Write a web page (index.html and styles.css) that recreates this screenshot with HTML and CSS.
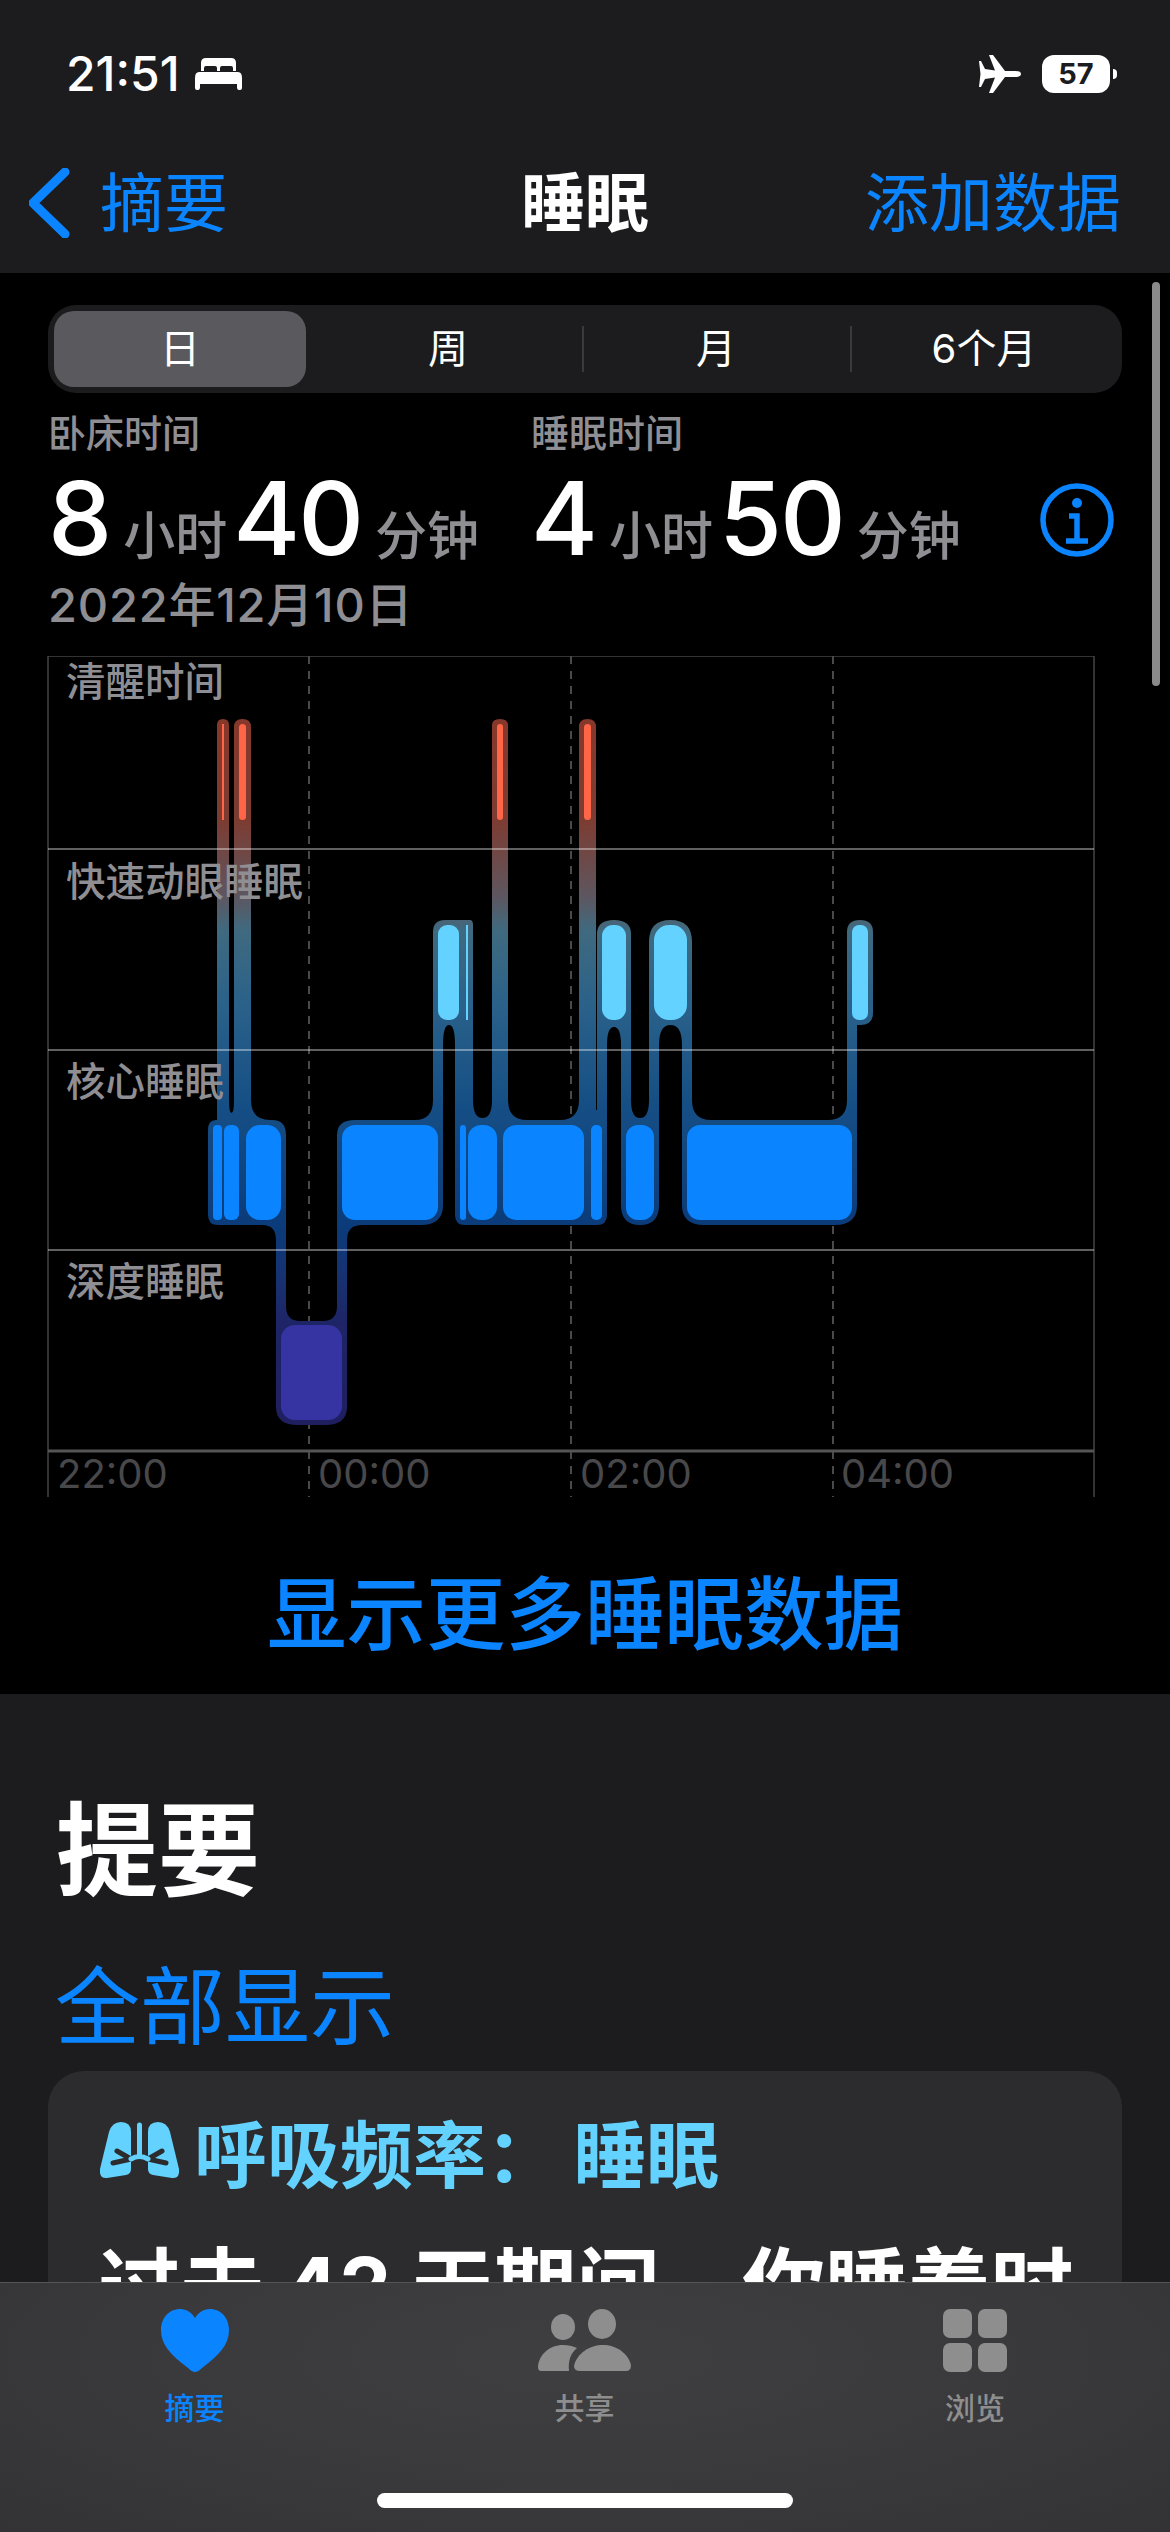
FILE: index.html
```html
<!DOCTYPE html>
<html lang="zh-CN">
<head>
    <meta charset="UTF-8">
    <meta name="viewport" content="width=device-width, initial-scale=1.0">
    <title>睡眠</title>
    <link rel="stylesheet" href="styles.css">
</head>
<body>
<div class="page">
    <header class="topbar">
        <div class="status">
            <div class="status-left">
                <span class="clock">21:51</span>
                <svg class="bed" viewBox="0 0 47 32"><path d="M6 13V5Q6 0 11 0H36Q41 0 41 5V13H38V10Q38 8 36 8H27Q25 8 25 10V13H22V10Q22 8 20 8H11Q9 8 9 10V13Z"/><path d="M4 14H43Q47 14 47 20V30Q47 32 45 32H44Q42 32 42 29V26H5V29Q5 32 3 32H2Q0 32 0 30V20Q0 14 4 14Z"/></svg>
            </div>
            <div class="status-right">
                <svg class="plane" viewBox="0 0 42 38"><path d="M42 19Q42 16 36 16H26L14 0H10L16 15.5L6 14L2 6H0L1.5 19L0 32H2L6 24L16 22.5L10 38H14L26 22H36Q42 22 42 19Z"/></svg>
                <span class="battery">57</span>
                <span class="battery-nub"></span>
            </div>
        </div>
        <nav class="navbar">
            <div class="back">
                <svg class="chevron" viewBox="0 0 41 70"><path d="M36 4L4 35L36 66"/></svg>
                <span>摘要</span>
            </div>
            <div class="nav-title">睡眠</div>
            <div class="nav-action">添加数据</div>
        </nav>
    </header>

    <section class="sleep">
        <div class="segment">
            <div class="seg-item selected">日</div>
            <div class="seg-item">周</div>
            <div class="seg-item line">月</div>
            <div class="seg-item line">6个月</div>
        </div>

        <div class="stats">
            <div class="stat first">
                <div class="stat-label">卧床时间</div>
                <div class="stat-value"><b>8</b><span>小时</span><b>40</b><span>分钟</span></div>
            </div>
            <div class="stat">
                <div class="stat-label">睡眠时间</div>
                <div class="stat-value"><b>4</b><span>小时</span><b>50</b><span>分钟</span></div>
            </div>
            <svg class="info" viewBox="0 0 74 74">
                <circle cx="37" cy="37" r="34"/>
                <circle class="dot" cx="37" cy="20" r="5"/>
                <path d="M29 33H37V58M26 58H48"/>
            </svg>
        </div>
        <div class="date">2022年12月10日</div>

        <!-- viewBox uses page coordinates so the numbers can be read off the screenshot -->
        <svg class="chart" viewBox="0 656 1170 842">
            <defs>
                <linearGradient id="halo" gradientUnits="userSpaceOnUse" x1="0" y1="719" x2="0" y2="1425">
                    <stop offset="0" stop-color="#86382a"/>
                    <stop offset="0.143" stop-color="#7c3c32"/>
                    <stop offset="0.25" stop-color="#5e565f"/>
                    <stop offset="0.3" stop-color="#3f6a80"/>
                    <stop offset="0.41" stop-color="#29618a"/>
                    <stop offset="0.55" stop-color="#154e84"/>
                    <stop offset="0.72" stop-color="#0b3b7a"/>
                    <stop offset="0.8" stop-color="#18306f"/>
                    <stop offset="0.86" stop-color="#1e2466"/>
                    <stop offset="1" stop-color="#1f1f60"/>
                </linearGradient>
            </defs>

            <path class="grid-edge" d="M48 656V1497M1094 656V1497M48 656H1094"/>
            <path class="grid-dash" d="M309 656V1497M571 656V1497M833 656V1497"/>

            <path fill="url(#halo)" d="M208 1130Q208 1120 216 1120H217V725Q217 719 223 719Q229 719 229 725V1100Q229 1113 231.500 1113Q234 1113 234 1100V727Q234 719 242.500 719Q251 719 251 727V1100Q251 1120 270 1120H272Q286 1120 286 1135V1306Q286 1321 300 1321H323Q337 1321 337 1306V1135Q337 1120 355 1120H415Q433 1120 433 1100V932Q433 920 445 920H470Q473 920 473 925V1100Q473 1118 482.500 1118Q492 1118 492 1100V725Q492 719 500 719Q508 719 508 725V1100Q508 1120 527 1120H560Q579 1120 579 1100V727Q579 719 587.500 719Q596 719 596 727V1110H597V934Q597 920 614 920Q631 920 631 934V1100Q631 1118 640 1118Q649 1118 649 1100V942Q649 920 670.500 920Q692 920 692 942V1100Q692 1120 711 1120H828Q847 1120 847 1100V932Q847 920 860 920Q873 920 873 932V1013Q873 1025 860 1025H857V1205Q857 1225 835 1225H704Q682 1225 682 1205V1045Q682 1025 670.500 1025Q659 1025 659 1045V1205Q659 1225 640 1225Q621 1225 621 1205V1045Q621 1027 614 1027Q607 1027 607 1045V1215Q607 1225 597 1225H465Q455 1225 455 1215V1045Q455 1025 449 1025Q443 1025 443 1045V1205Q443 1225 421 1225H362Q347 1225 347 1240V1407Q347 1425 325 1425H298Q276 1425 276 1407V1240Q276 1225 262 1225H218Q208 1225 208 1215Z"/>

            <path class="grid-line" d="M48 849H1094M48 1050H1094M48 1250H1094"/>
            <path class="grid-base" d="M48 1451H1094"/>

            <g class="awake">
                <rect x="222" y="724" width="2" height="96"/>
                <rect x="239" y="724" width="7" height="96" rx="3.500"/>
                <rect x="497" y="724" width="6" height="96" rx="3"/>
                <rect x="584" y="724" width="7" height="96" rx="3.500"/>
            </g>
            <g class="rem">
                <rect x="438" y="925" width="21" height="95" rx="9"/>
                <rect x="466" y="925" width="2" height="95"/>
                <rect x="602" y="925" width="24" height="95" rx="11"/>
                <rect x="654" y="925" width="33" height="95" rx="15"/>
                <rect x="852" y="925" width="16" height="95" rx="7"/>
            </g>
            <g class="core">
                <rect x="213" y="1125" width="9" height="95" rx="4"/>
                <rect x="224" y="1125" width="15" height="95" rx="6"/>
                <rect x="246" y="1125" width="35" height="95" rx="14"/>
                <rect x="342" y="1125" width="96" height="95" rx="13"/>
                <rect x="460" y="1125" width="6" height="95" rx="3"/>
                <rect x="468" y="1125" width="29" height="95" rx="13"/>
                <rect x="503" y="1125" width="81" height="95" rx="13"/>
                <rect x="591" y="1125" width="11" height="95" rx="5"/>
                <rect x="626" y="1125" width="28" height="95" rx="12"/>
                <rect x="687" y="1125" width="165" height="95" rx="13"/>
            </g>
            <rect class="deep" x="281" y="1325" width="61" height="95" rx="14"/>

            <g class="row-label">
                <text x="66" y="696">清醒时间</text>
                <text x="66" y="896">快速动眼睡眠</text>
                <text x="66" y="1096">核心睡眠</text>
                <text x="66" y="1296">深度睡眠</text>
            </g>
            <g class="hour-label">
                <text x="57" y="1488">22:00</text>
                <text x="318" y="1488">00:00</text>
                <text x="580" y="1488">02:00</text>
                <text x="841" y="1488">04:00</text>
            </g>
        </svg>

        <div class="more">显示更多睡眠数据</div>
        <div class="scroll-thumb"></div>
    </section>

    <section class="summary">
        <h2>提要</h2>
        <div class="show-all">全部显示</div>
        <div class="card">
            <div class="card-title">
                <svg class="lungs" viewBox="0 0 79 57">
                    <path class="lobe" d="M31 10Q31 0 21 0Q12 0 9 10L0 47Q-1 57 7 56L26 53Q31 52 31 47Z"/>
                    <path class="lobe" d="M48 10Q48 0 58 0Q67 0 70 10L79 47Q80 57 72 56L53 53Q48 52 48 47Z"/>
                    <path class="cut" d="M17 29L31 37L13 41M62 29L48 37L66 41"/>
                    <path class="pipe" d="M39.500 3V33M31 37Q39.500 32 48 37"/>
                </svg>
                <span>呼吸频率： 睡眠</span>
            </div>
            <p class="card-text">过去 42 天期间，你睡着时</p>
        </div>
    </section>

    <footer class="tabbar">
        <div class="tabs">
            <div class="tab active">
                <svg class="tab-icon heart" viewBox="0 0 68 63"><path d="M34 63Q31 63 27 59C10 46 0 36 0 21C0 9 8 0 19 0C26 0 31 4 34 9C37 4 42 0 49 0C60 0 68 9 68 21C68 36 58 46 41 59Q37 63 34 63Z"/></svg>
                <span>摘要</span>
            </div>
            <div class="tab">
                <svg class="tab-icon people" viewBox="0 0 93 61">
                    <ellipse cx="25" cy="17" rx="12" ry="13"/>
                    <ellipse cx="64" cy="14" rx="14" ry="15"/>
                    <path d="M3 61Q0 61 0 57C1 44 12 35 25 35C30 35 35 36 39 38C33 43 30 50 31 61Z"/>
                    <path d="M42 61Q36 61 36 56C39 43 52 35 65 35C78 35 90 43 93 55Q93 61 88 61Z"/>
                </svg>
                <span>共享</span>
            </div>
            <div class="tab">
                <svg class="tab-icon browse" viewBox="0 0 64 63">
                    <rect x="0" y="0" width="29" height="29" rx="7"/>
                    <rect x="35" y="0" width="29" height="29" rx="7"/>
                    <rect x="0" y="34" width="29" height="29" rx="7"/>
                    <rect x="35" y="34" width="29" height="29" rx="7"/>
                </svg>
                <span>浏览</span>
            </div>
        </div>
        <div class="home-bar"></div>
    </footer>
</div>
</body>
</html>
```

FILE: styles.css
```css
body {
    margin: 0;
    background: #000;
    font-family: Inter, "Noto Sans CJK SC", sans-serif;
    color: #fff;
}
.page {
    position: relative;
    width: 1170px;
    height: 2532px;
    overflow: hidden;
}

/* top bar */
.topbar {
    height: 273px;
    background: #1c1c1e;
}
.status {
    display: flex;
    justify-content: space-between;
    align-items: center;
    height: 148px;
    padding: 0 53px 0 66px;
}
.status-left, .status-right {
    display: flex;
    align-items: center;
}
.clock {
    font-size: 48px;
    font-weight: 500;
    line-height: 46px;
}
.bed {
    width: 47px;
    height: 32px;
    margin-left: 15px;
    fill: #fff;
}
.plane {
    width: 42px;
    height: 38px;
    fill: #fff;
}
.battery {
    width: 68px;
    height: 38px;
    margin-left: 21px;
    border-radius: 12px;
    background: #fff;
    color: #1c1c1e;
    font-size: 29px;
    font-weight: 700;
    line-height: 38px;
    text-align: center;
}
.battery-nub {
    width: 4px;
    height: 10px;
    margin-left: 3px;
    border-radius: 0 5px 5px 0;
    background: #fff;
}
.navbar {
    display: grid;
    grid-template-columns: 1fr auto 1fr;
    align-items: center;
    height: 110px;
    padding: 0 29px;
    font-size: 64px;
    line-height: 110px;
}
.back {
    display: flex;
    align-items: center;
    gap: 30px;
    color: #0a84ff;
}
.chevron {
    width: 41px;
    height: 70px;
    fill: none;
    stroke: #0a84ff;
    stroke-width: 9;
    stroke-linecap: round;
    stroke-linejoin: round;
}
.nav-title {
    font-weight: 700;
}
.nav-action {
    margin-right: 20px;
    color: #0a84ff;
    text-align: right;
}

/* sleep chart part */
.sleep {
    position: relative;
    background: #000;
    padding-top: 32px;
}
.scroll-thumb {
    position: absolute;
    top: 9px;
    right: 10px;
    width: 8px;
    height: 404px;
    border-radius: 4px;
    background: #8a8a8a;
}
.segment {
    display: grid;
    grid-template-columns: repeat(4, 252px);
    column-gap: 16px;
    height: 76px;
    margin: 0 48px;
    padding: 6px;
    border-radius: 28px;
    background: #1c1c1e;
}
.seg-item {
    position: relative;
    font-size: 40px;
    line-height: 76px;
    text-align: center;
}
.seg-item.selected {
    border-radius: 20px;
    background: #5a5a5e;
}
.seg-item.line::before {
    content: "";
    position: absolute;
    left: -8px;
    top: 15px;
    width: 2px;
    height: 46px;
    background: #3a3a3c;
}
.stats {
    display: flex;
    align-items: flex-end;
    margin-top: 17px;
    padding: 0 56px 0 48px;
}
.stat.first {
    width: 483px;
}
.stat-label {
    font-size: 38px;
    font-weight: 500;
    line-height: 46px;
    color: #8e8e93;
}
.stat-value {
    display: flex;
    align-items: baseline;
    height: 104px;
    margin-top: 10px;
    line-height: 104px;
}
.stat-value b {
    font-size: 102px;
    font-weight: 500;
    letter-spacing: -2px;
}
.stat-value span {
    margin: 0 6px 0 13px;
    font-size: 52px;
    font-weight: 500;
    color: #8e8e93;
}
.info {
    width: 74px;
    height: 74px;
    margin: 0 0 13px auto;
    fill: none;
    stroke: #0a84ff;
    stroke-width: 5.500;
}
.info .dot {
    fill: #0a84ff;
    stroke: none;
}
.date {
    margin: 7px 0 0 48px;
    font-size: 47px;
    font-weight: 500;
    line-height: 56px;
    letter-spacing: 0.8px;
    color: #8e8e93;
}
.chart {
    display: block;
    width: 1170px;
    height: 842px;
    margin-top: 23px;
}
.grid-edge {
    fill: none;
    stroke: #444;
    stroke-width: 1.500;
}
.grid-dash {
    fill: none;
    stroke: #4a4a4a;
    stroke-width: 2;
    stroke-dasharray: 8 7;
}
.grid-line {
    fill: none;
    stroke: rgba(255, 255, 255, 0.5);
    stroke-width: 1.500;
}
.grid-base {
    fill: none;
    stroke: #555;
    stroke-width: 3;
}
.awake { fill: #ff6647; }
.rem { fill: #64d2ff; }
.core { fill: #0a84ff; }
.deep { fill: #3634a3; }
.row-label text {
    font-size: 39.500px;
    font-weight: 500;
    fill: #8e8e93;
}
.hour-label text {
    font-size: 40px;
    fill: #48484a;
}
.more {
    height: 160px;
    padding-top: 36px;
    font-size: 79.500px;
    font-weight: 500;
    line-height: 160px;
    text-align: center;
    color: #0a84ff;
}

/* summary */
.summary {
    height: 838px;
    padding: 0 48px;
    background: #1c1c1e;
}
.summary h2 {
    margin: 0;
    padding: 101px 0 0 8px;
    font-size: 102px;
    font-weight: 700;
    line-height: 112px;
}
.show-all {
    margin-top: 51px;
    padding-left: 7px;
    font-size: 85px;
    line-height: 100px;
    color: #0a84ff;
}
.card {
    height: 500px;
    margin-top: 13px;
    padding: 38px 52px 0;
    border-radius: 36px;
    background: #2c2c2e;
}
.card-title {
    display: flex;
    align-items: center;
    gap: 15px;
    height: 82px;
    font-size: 73px;
    font-weight: 700;
    word-spacing: -3px;
    color: #64d2ff;
}
.lungs {
    width: 79px;
    height: 57px;
    overflow: visible;
}
.lobe { fill: #64d2ff; }
.cut {
    fill: none;
    stroke: #2c2c2e;
    stroke-width: 5;
    stroke-linecap: round;
    stroke-linejoin: round;
}
.pipe {
    fill: none;
    stroke: #64d2ff;
    stroke-width: 5;
    stroke-linecap: round;
}
.card-text {
    margin: 46px 0 0 -2px;
    font-size: 82.800px;
    font-weight: 700;
    line-height: 100px;
    white-space: nowrap;
}

/* tab bar */
.tabbar {
    position: absolute;
    left: 0;
    right: 0;
    bottom: 0;
    display: flex;
    flex-direction: column;
    height: 250px;
    box-sizing: border-box;
    padding-top: 26px;
    border-top: 1px solid #555;
    background: radial-gradient(ellipse at 50% 30%, #3f3f41 0%, #3a3a3c 50%, #333335 100%);
}
.tabs {
    display: grid;
    grid-template-columns: 389px 391px 390px;
    justify-items: center;
}
.tab {
    display: flex;
    flex-direction: column;
    align-items: center;
    font-size: 30px;
    font-weight: 500;
    line-height: 40px;
    color: #8e8e8e;
}
.tab.active {
    color: #0a84ff;
}
.tab-icon {
    height: 63px;
    margin-bottom: 16px;
    fill: #8e8e8e;
}
.heart {
    width: 68px;
    fill: #0a84ff;
}
.people {
    width: 93px;
}
.browse {
    width: 64px;
}
.home-bar {
    width: 416px;
    height: 15px;
    margin: auto auto 24px;
    border-radius: 8px;
    background: #fff;
}
```
